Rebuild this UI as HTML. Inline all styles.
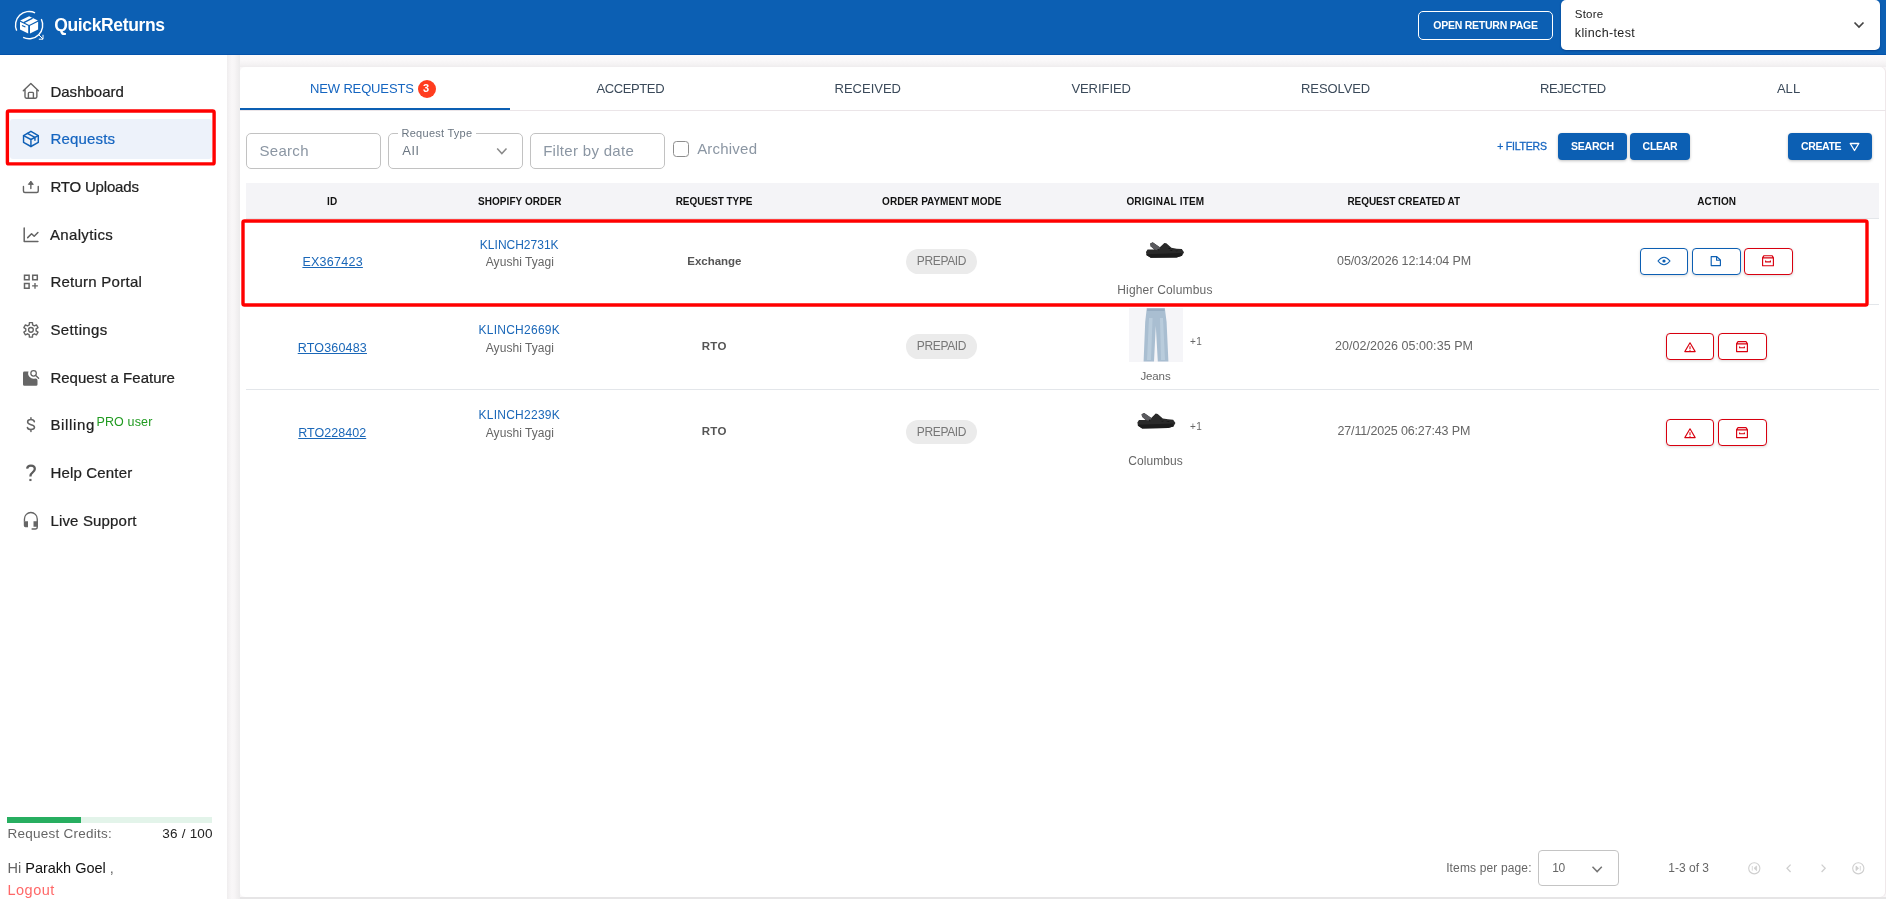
<!DOCTYPE html>
<html lang="en">
<head>
<meta charset="utf-8">
<title>QuickReturns - Requests</title>
<style>
*{box-sizing:border-box;margin:0;padding:0}
html,body{width:1886px;height:899px;overflow:hidden}
body{will-change:opacity,transform}
body{font-family:"Liberation Sans",sans-serif;background:#f9f7f8;color:#222;position:relative}
.abs{position:absolute}
.t{position:absolute;white-space:nowrap;line-height:1}
.c{transform:translateX(-50%)}
/* header */
#hdr{position:absolute;left:0;top:0;width:1886px;height:55px;background:#0c5fb3;border-bottom:1px solid #0453ab}
#brand{left:54.2px;top:17px;font-size:17.5px;font-weight:700;color:#fff;letter-spacing:-0.2px}
#orp{position:absolute;left:1418px;top:11px;width:135px;height:29px;border:1px solid #fff;border-radius:5px;color:#fff;font-size:10.5px;font-weight:700;text-align:center;line-height:27px;letter-spacing:0.1px}
#store{position:absolute;left:1561px;top:0;width:319px;height:50px;background:#fff;border-radius:5px;box-shadow:0 1px 2px rgba(0,40,110,.5)}
/* sidebar */
#side{position:absolute;left:0;top:55px;width:227px;height:844px;background:#fff}
#sideshadow{position:absolute;left:227px;top:55px;width:13px;height:844px;background:linear-gradient(90deg,#efedee 0%,#f4f2f3 15%,#f9f7f8 38%,#f7f5f6 58%,#f2f0f1 78%,#ecebec 100%)}
#topgap{position:absolute;left:236px;top:55px;width:1650px;height:12px;background:linear-gradient(180deg,#fcfafb 0%,#faf8f9 45%,#f4f2f3 80%,#efecee 100%)}
#botgap{position:absolute;left:236px;top:897px;width:1650px;height:2px;background:#e6e5e6}
.nav{position:absolute;left:50.4px;font-size:15px;color:#222;-webkit-text-stroke:0.22px;white-space:nowrap;line-height:1;letter-spacing:0.15px}
.ico{position:absolute;left:21px;width:20px;height:20px}
/* main */
#card{position:absolute;left:240px;top:67px;width:1645px;box-shadow:1px 0 0 #efe8ea;height:830px;background:#fff;border-radius:5px}
.tab{font-size:13px;color:#3b4a5a;letter-spacing:0.45px;top:82px}
.inp{position:absolute;top:133px;height:36px;width:135px;border:1px solid #c2c2c2;border-radius:5px;background:#fff}
.ph{font-size:15px;color:#8b96a3;letter-spacing:0.2px}
.btn{position:absolute;top:133px;height:27px;background:#0c5fb3;border-radius:4px;color:#fff;font-size:10.5px;font-weight:700;text-align:center;line-height:27px;box-shadow:0 1px 3px rgba(0,0,0,.25)}
.th{font-size:10px;font-weight:700;color:#111;top:197px;letter-spacing:0.2px}
.td{font-size:12px;color:#666}
.lnk{color:#1a67b8}
.chip{position:absolute;width:70.5px;height:24.6px;border-radius:12.3px;background:#ebebeb;color:#777;font-size:12px;text-align:center;line-height:24px;left:906.2px}
.ab{position:absolute;width:49px;height:27px;border-radius:4px;border:1px solid #d8000f;background:#fff;box-shadow:0 1px 3px rgba(0,0,0,.15)}
.ab.b{border-color:#0c5fb3}
.ab svg{position:absolute;left:17px;top:6px;width:14px;height:14px}
.rowline{position:absolute;left:246px;width:1633px;height:1px;background:#e3e6ea}
</style>
</head>
<body>
<div id="hdr"></div>
<div class="t" id="brand" style="letter-spacing:-0.352px">QuickReturns</div>
<div id="orp" style="letter-spacing:-0.245px">OPEN RETURN PAGE</div>
<div id="store"></div>
<div class="t" style="left:1574.86px;top:9px;font-size:11.5px;color:#222;letter-spacing:0.177px">Store</div>
<div class="t" style="left:1574.80px;top:27px;font-size:12.5px;color:#222;letter-spacing:0.371px">klinch-test</div>

<div id="side"></div>
<div id="topgap"></div>
<div id="botgap"></div>
<div id="sideshadow"></div>

<div id="card"></div>


<div class="abs" style="left:10px;top:119px;width:202px;height:40px;background:#edf2fa;border-radius:3px"></div>
<!-- icons -->
<svg class="abs" style="left:0;top:0" width="240" height="560" viewBox="0 0 240 560" fill="none" stroke="#646464" stroke-width="1.4" stroke-linecap="round" stroke-linejoin="round">
  <!-- logo -->
  <g stroke="#fff" stroke-width="1.4" stroke-linecap="butt">
    <path d="M35.06 12.88 A13.6 13.6 0 0 0 16.68 30.63"/>
    <path d="M23.14 37.33 A13.6 13.6 0 0 0 41.32 19.14"/>
    <path d="M38.6 34.6 L43 39 M43 34.8 V39.2 H38.8" stroke-width="1"/>
  </g>
  <g fill="#fff" stroke="none">
    <path d="M29.1 16.3 L37.9 20.6 L29.1 25 L20.2 20.6 Z"/>
    <path d="M20 21.7 L28.2 25.8 V33.6 L20 29.5 Z"/>
    <path d="M30 25.8 L38.1 21.7 V29.5 L30 33.6 Z"/>
  </g>
  <path d="M32.6 18.2 L23.8 22.6" stroke="#0c5fb3" stroke-width="1.5" stroke-linecap="butt"/>
  <path d="M22 25.4 L25.4 27" stroke="#0c5fb3" stroke-width="1.1" stroke-linecap="butt"/>
  <!-- home -->
  <path d="M23.3 90.8 L30.85 83.5 L38.4 90.8 M25 89.4 V96.8 Q25 98.2 26.4 98.2 H35.45 Q36.85 98.2 36.85 96.8 V89.4 M28.4 98.2 V93.2 Q28.4 92.4 29.2 92.4 H32.6 Q33.4 92.4 33.4 93.2 V98.2"/>
  <!-- package -->
  <g stroke="#0f60b6" stroke-width="1.45">
    <path d="M30.93 131.3 L38.3 135.6 V142.4 L30.93 146.5 L23.55 142.4 V135.6 Z"/>
    <path d="M23.6 135.65 L30.93 139.5 L38.25 135.65 M30.93 139.5 V146.4 M27.3 133.4 L34.95 137.4 V140.3"/>
  </g>
  <!-- upload -->
  <path d="M23.45 186.4 V191 Q23.45 192.5 24.9 192.5 H36.8 Q38.25 192.5 38.25 191 V186.4 M30.85 188.6 V182"/>
  <path d="M28.6 184.1 L30.85 181.2 L33.1 184.1 Z" fill="#646464" stroke-width="1"/>
  <!-- analytics -->
  <path d="M24.2 227.9 V241.5 H37.9 M27.7 237.6 L31.55 233.7 L34.2 236.3 L37.9 232.5" stroke-width="1.5"/>
  <!-- grid plus -->
  <path d="M24.5 275.15 h4.6 v4.6 h-4.6 Z M32.7 275.15 h4.6 v4.6 h-4.6 Z M24.5 283.55 h4.6 v4.6 h-4.6 Z" stroke-width="1.5" stroke-linejoin="miter"/>
  <path d="M35 283 v5.8 M32.1 285.9 h5.8" stroke-width="1.35" stroke-linecap="butt"/>
  <!-- gear -->
  <path d="M29.26 324.88 L29.38 322.57 L32.48 322.57 L32.60 324.88 L34.40 325.92 L36.47 324.87 L38.02 327.56 L36.08 328.82 L36.08 330.90 L38.02 332.16 L36.47 334.85 L34.40 333.80 L32.60 334.84 L32.48 337.15 L29.38 337.15 L29.26 334.84 L27.46 333.80 L25.39 334.85 L23.84 332.16 L25.78 330.90 L25.78 328.82 L23.84 327.56 L25.39 324.87 L27.46 325.92 Z" stroke-width="1.35"/>
  <circle cx="30.93" cy="329.86" r="2.4" stroke-width="1.35"/>
  <!-- request feature -->
  <path d="M24.4 371.5 H28.5 A5.4 5.4 0 0 0 35.2 378.5 Q37.5 378.3 37.5 380.4 V384.4 A1.4 1.4 0 0 1 36.1 385.8 H24.4 A1.4 1.4 0 0 1 23 384.4 V372.9 A1.4 1.4 0 0 1 24.4 371.5 Z" fill="#666" stroke="none"/>
  <circle cx="33.58" cy="373.35" r="2.75" stroke-width="1.25"/>
  <path d="M35.7 375.5 L38.6 378.2" stroke-width="1.4"/>
  <!-- dollar -->
  <path d="M34.4 421.8 C34 420.2 32.7 419.6 30.95 419.6 C29 419.6 27.6 420.6 27.6 422.1 C27.6 423.8 29.3 424.3 30.95 424.7 C32.9 425.2 34.5 425.8 34.5 427.3 C34.5 428.8 33 429.5 30.95 429.5 C29.1 429.5 27.7 428.9 27.4 427.5 M30.95 417.7 V419.6 M30.95 429.5 V431.6" stroke-width="1.5"/>
  <!-- question -->
  <path d="M27.1 468.6 C27.4 466.6 28.9 465.6 30.9 465.6 C33.2 465.6 34.8 467 34.8 469 C34.8 470.8 33.6 471.7 32.4 472.6 C31 473.6 30.4 474.5 30.4 476.4" stroke="#5c5c5c" stroke-width="2.3" stroke-linecap="butt"/>
  <rect x="29.35" y="478.9" width="2.15" height="2.15" fill="#646464" stroke="none"/>
  <!-- headset -->
  <path d="M24.45 521.5 V518.9 A6.4 6.4 0 0 1 37.25 518.9 V527 Q37.25 529 35.2 529 H31.6" stroke-width="1.35" stroke-linecap="butt"/>
  <path d="M23.8 521.3 H28 V527.2 H25.4 A1.6 1.6 0 0 1 23.8 525.6 Z M33.5 521.3 H37.9 V526.8 H33.5 Z" fill="#666" stroke="none"/>
</svg>
<!-- sidebar nav2 -->
<svg class="abs" style="left:0;top:104px" width="222" height="68" viewBox="0 104 222 68"><rect x="7.4" y="111" width="206.7" height="52.9" rx="1.5" fill="none" stroke="#ff0000" stroke-width="3.4"/></svg>
<div class="nav" style="top:84px;letter-spacing:0.021px">Dashboard</div>
<div class="nav" style="top:131px;color:#1565c0;letter-spacing:0.194px">Requests</div>
<div class="nav" style="top:179px;letter-spacing:-0.178px">RTO Uploads</div>
<div class="nav" style="left:49.9px;top:227px;letter-spacing:0.36px">Analytics</div>
<div class="nav" style="top:274px;letter-spacing:0.254px">Return Portal</div>
<div class="nav" style="top:322px;letter-spacing:0.389px">Settings</div>
<div class="nav" style="top:370px;letter-spacing:0.018px">Request a Feature</div>
<div class="nav" style="top:417px;letter-spacing:0.651px">Billing</div>
<div class="t" style="left:96.48px;top:416px;font-size:12.5px;color:#1f9a1f;letter-spacing:0.141px">PRO user</div>
<div class="nav" style="top:465px;letter-spacing:0.171px">Help Center</div>
<div class="nav" style="top:513px;letter-spacing:0.168px">Live Support</div>

<div class="abs" style="left:7px;top:817px;width:205px;height:6px;background:#e3f4ea"></div>
<div class="abs" style="left:7px;top:817px;width:74px;height:6px;background:#27ae60"></div>
<div class="t" style="left:7.57px;top:826.6px;font-size:13.5px;color:#666;letter-spacing:0.25px">Request Credits:</div>
<div class="t" style="right:1673.17px;top:826.6px;font-size:13.5px;color:#222;letter-spacing:0.231px">36 / 100</div>
<div class="t" style="left:7.5px;top:861px;font-size:14.5px;color:#666">Hi <span style="color:#111">Parakh Goel</span> ,</div>
<div class="t" style="left:7.43px;top:883px;font-size:14.5px;color:#ff6868;letter-spacing:0.517px">Logout</div>

<!-- tabs -->
<div class="abs" style="left:240px;top:109.5px;width:1646px;height:1px;background:#ebe5e8"></div>
<div class="abs" style="left:240px;top:108px;width:270px;height:2px;background:#0c5fb3"></div>
<div class="t tab" style="left:310.02px;color:#1565c0;letter-spacing:-0.145px">NEW REQUESTS</div>
<div class="abs" style="left:418px;top:79.5px;width:18.2px;height:18.2px;border-radius:9.1px;background:#ff3d1f"></div>
<div class="t" style="left:423px;top:83px;font-size:11px;font-weight:700;color:#fff">3</div>
<div class="t tab c" style="left:630.30px;letter-spacing:-0.381px">ACCEPTED</div>
<div class="t tab c" style="left:867.78px;letter-spacing:-0.011px">RECEIVED</div>
<div class="t tab c" style="left:1101.17px;letter-spacing:-0.052px">VERIFIED</div>
<div class="t tab c" style="left:1335.58px;letter-spacing:-0.092px">RESOLVED</div>
<div class="t tab c" style="left:1572.89px;letter-spacing:-0.339px">REJECTED</div>
<div class="t tab c" style="left:1788.54px;letter-spacing:0.031px">ALL</div>

<!-- filters -->
<div class="inp" style="left:246px"></div>
<div class="t ph" style="left:259.39px;top:143px;letter-spacing:0.327px">Search</div>
<div class="inp" style="left:388px"></div>
<div class="abs" style="left:398px;top:131px;width:78px;height:5px;background:#fff"></div>
<div class="t" style="left:401.52px;top:128px;font-size:11px;color:#6b7682;letter-spacing:0.266px">Request Type</div>
<div class="t" style="left:402.14px;top:144px;font-size:13px;color:#6b7682;letter-spacing:1.076px">All</div>
<svg class="abs" style="left:495px;top:146px" width="14" height="10" viewBox="0 0 14 10"><path d="M2.2 2.6 L6.85 7.6 L11.5 2.6" fill="none" stroke="#8a8a8a" stroke-width="1.5"/></svg>
<div class="inp" style="left:530px"></div>
<div class="t ph" style="left:543.15px;top:143px;letter-spacing:0.302px">Filter by date</div>
<div class="abs" style="left:673px;top:141px;width:16px;height:16px;border:1.5px solid #8e8e8e;border-radius:3.5px;background:#fff"></div>
<div class="t ph" style="left:697.14px;top:141px;letter-spacing:0.213px">Archived</div>
<div class="t" style="left:1497.14px;top:140.6px;font-size:10.5px;color:#1565c0;-webkit-text-stroke:0.3px #1565c0;letter-spacing:-0.204px">+ FILTERS</div>
<div class="btn" style="left:1558px;width:69px;letter-spacing:-0.249px">SEARCH</div>
<div class="btn" style="left:1630px;width:60px;letter-spacing:-0.278px">CLEAR</div>
<div class="btn" style="left:1788px;width:84px;text-align:left;padding-left:13px;letter-spacing:-0.394px">CREATE</div>
<svg class="abs" style="left:1849px;top:142px" width="11" height="10" viewBox="0 0 11 10"><path d="M1.2 1.5 H9.8 L5.5 8.5 Z" fill="none" stroke="#fff" stroke-width="1.3" stroke-linejoin="round"/></svg>

<!-- table header -->
<div class="abs" style="left:246px;top:183px;width:1633px;height:36px;background:#f4f4f7"></div>
<div class="rowline" style="top:218px"></div>
<div class="t th c" style="left:332.35px;letter-spacing:0.404px">ID</div>
<div class="t th c" style="left:519.68px;letter-spacing:0.072px">SHOPIFY ORDER</div>
<div class="t th c" style="left:714.08px;letter-spacing:-0.038px">REQUEST TYPE</div>
<div class="t th c" style="left:941.76px;letter-spacing:0.021px">ORDER PAYMENT MODE</div>
<div class="t th c" style="left:1165.36px;letter-spacing:0.198px">ORIGINAL ITEM</div>
<div class="t th c" style="left:1403.75px;letter-spacing:-0.06px">REQUEST CREATED AT</div>
<div class="t th c" style="left:1716.70px;letter-spacing:0.058px">ACTION</div>
<div class="rowline" style="top:304px"></div>
<div class="rowline" style="top:389px"></div>

<!-- row 1 -->
<div class="t td c lnk" style="left:332.63px;top:256px;text-decoration:underline;font-size:12.5px;letter-spacing:0.262px">EX367423</div>
<div class="t td c lnk" style="left:519.23px;top:239px;letter-spacing:-0.001px">KLINCH2731K</div>
<div class="t td c" style="left:519.93px;top:256px;letter-spacing:0.056px">Ayushi Tyagi</div>
<div class="t td c" style="left:714.38px;top:256px;font-weight:700;font-size:11.5px;color:#555;letter-spacing:-0.032px">Exchange</div>
<div class="chip" style="top:249px;letter-spacing:-0.372px">PREPAID</div>
<div class="t td c" style="left:1164.91px;top:284px;letter-spacing:0.177px">Higher Columbus</div>
<div class="t td c" style="left:1404.02px;top:255px;font-size:12.5px;letter-spacing:-0.142px">05/03/2026 12:14:04 PM</div>
<!-- row 2 -->
<div class="t td c lnk" style="left:332.35px;top:342px;text-decoration:underline;font-size:12.5px;letter-spacing:0.178px">RTO360483</div>
<div class="t td c lnk" style="left:519.27px;top:324px;letter-spacing:0.257px">KLINCH2669K</div>
<div class="t td c" style="left:519.93px;top:342px;letter-spacing:0.056px">Ayushi Tyagi</div>
<div class="t td c" style="left:714.24px;top:341px;font-weight:700;font-size:11.5px;color:#555;letter-spacing:0.348px">RTO</div>
<div class="chip" style="top:334.2px;line-height:25.4px;letter-spacing:-0.372px">PREPAID</div>
<div class="t td c" style="left:1155.48px;top:371px;font-size:11.5px;letter-spacing:-0.109px">Jeans</div>
<div class="t td" style="left:1190.02px;top:337px;font-size:10px;letter-spacing:0.454px">+1</div>
<div class="t td c" style="left:1404.01px;top:340px;font-size:12.5px;letter-spacing:0.054px">20/02/2026 05:00:35 PM</div>
<!-- row 3 -->
<div class="t td c lnk" style="left:332.24px;top:427px;text-decoration:underline;font-size:12.5px;letter-spacing:0.033px">RTO228402</div>
<div class="t td c lnk" style="left:519.27px;top:409px;letter-spacing:0.257px">KLINCH2239K</div>
<div class="t td c" style="left:519.93px;top:427px;letter-spacing:0.056px">Ayushi Tyagi</div>
<div class="t td c" style="left:714.24px;top:426px;font-weight:700;font-size:11.5px;color:#555;letter-spacing:0.348px">RTO</div>
<div class="chip" style="top:419.6px;line-height:25.4px;letter-spacing:-0.372px">PREPAID</div>
<div class="t td c" style="left:1155.61px;top:455px;letter-spacing:0.087px">Columbus</div>
<div class="t td" style="left:1190.02px;top:422px;font-size:10px;letter-spacing:0.454px">+1</div>
<div class="t td c" style="left:1403.84px;top:425px;font-size:12.5px;letter-spacing:-0.147px">27/11/2025 06:27:43 PM</div>


<!-- action buttons -->
<div class="ab b" style="left:1640px;top:248px;width:48px"></div>
<div class="ab b" style="left:1692px;top:248px"></div>
<div class="ab" style="left:1744px;top:248px"></div>
<div class="ab" style="left:1666px;top:333px;width:48px"></div>
<div class="ab" style="left:1718px;top:333px"></div>
<div class="ab" style="left:1666px;top:419px;width:48px"></div>
<div class="ab" style="left:1718px;top:419px"></div>
<svg class="abs" style="left:1630px;top:230px" width="180" height="230" viewBox="1630 230 180 230">
<path d="M1658 261 Q1664 253.4 1670 261 Q1664 268.6 1658 261 Z" fill="none" stroke="#0c5fb3" stroke-width="1.1"/><circle cx="1664" cy="261" r="1.6" fill="#0c5fb3"/>
<path d="M1711.1999999999998 256.6 H1716.8 L1720.3999999999999 260 V265.6 H1711.1999999999998 Z M1716.6 256.8 V260.2 H1720.1999999999998" fill="none" stroke="#0c5fb3" stroke-width="1.15" stroke-linejoin="round"/>
<path d="M1762.6 257.7 L1764 255.7 H1772 L1773.4 257.7 V265.7 H1762.6 Z M1762.6 257.9 H1773.4" fill="none" stroke="#d8000f" stroke-width="1.15" stroke-linejoin="round"/><path d="M1765.6 260.5 V261.9 H1770.4 V260.5" fill="none" stroke="#d8000f" stroke-width="1.1" stroke-linejoin="round"/>
<path d="M1690 342.8 L1695.2 351.6 H1684.8 Z" fill="none" stroke="#d8000f" stroke-width="1.1" stroke-linejoin="round"/><path d="M1690 346.2 V349.2" stroke="#d8000f" stroke-width="1.1"/><circle cx="1690" cy="350.5" r=".55" fill="#d8000f"/>
<path d="M1736.6 343.6 L1738 341.6 H1746 L1747.4 343.6 V351.6 H1736.6 Z M1736.6 343.8 H1747.4" fill="none" stroke="#d8000f" stroke-width="1.15" stroke-linejoin="round"/><path d="M1739.6 346.4 V347.8 H1744.4 V346.4" fill="none" stroke="#d8000f" stroke-width="1.1" stroke-linejoin="round"/>
<path d="M1690 428.8 L1695.2 437.6 H1684.8 Z" fill="none" stroke="#d8000f" stroke-width="1.1" stroke-linejoin="round"/><path d="M1690 432.2 V435.2" stroke="#d8000f" stroke-width="1.1"/><circle cx="1690" cy="436.5" r=".55" fill="#d8000f"/>
<path d="M1736.6 429.6 L1738 427.6 H1746 L1747.4 429.6 V437.6 H1736.6 Z M1736.6 429.8 H1747.4" fill="none" stroke="#d8000f" stroke-width="1.15" stroke-linejoin="round"/><path d="M1739.6 432.4 V433.8 H1744.4 V432.4" fill="none" stroke="#d8000f" stroke-width="1.1" stroke-linejoin="round"/>
</svg>

<!-- product images -->
<svg class="abs" style="left:1120px;top:222px" width="90" height="220" viewBox="1120 222 90 220">
<g transform="translate(1125,222) scale(0.0645)"><path d="M390 335 L430 315 L540 392 L610 325 L640 330 L720 400 L800 415 L880 420 L915 470 L885 525 L800 550 L400 555 L335 515 L325 465 L350 425 L455 425 L398 375 Z" fill="#2a2a2a"/><path d="M392 336 L430 316 L545 395 L520 440 L455 425 L398 375 Z" fill="#5a5a5e"/><path d="M330 500 L880 480 L885 525 L800 550 L400 555 L335 515 Z" fill="#1c1c1c"/><ellipse cx="515" cy="432" rx="14" ry="14" fill="#1a1a1a"/><path d="M665 405 l40 0 l-15 12 z M690 440 l50 -5 l-20 14 z M770 445 l60 0 l-25 10 z" fill="#111"/></g>
<rect x="1129" y="308" width="54" height="54" fill="#f5f5f8"/>
<path d="M1146.8 308 H1164.8 L1166.6 322 L1168.4 361.6 H1157.8 L1155.8 326 L1154 361.6 H1143.6 L1145.2 322 Z" fill="#a9bed1"/>
<path d="M1149 318 L1152.6 318 L1151 360 L1147 360 Z M1160 318 L1163 318 L1165 360 L1161 360 Z" fill="#bfd0df" opacity=".75"/>
<path d="M1147 309 H1164.6 V311 H1147 Z" fill="#97adc2"/>
<g transform="translate(1116.4,392.6) scale(0.0645)"><path d="M390 335 L430 315 L540 392 L610 325 L640 330 L720 400 L800 415 L880 420 L915 470 L885 525 L800 550 L400 555 L335 515 L325 465 L350 425 L455 425 L398 375 Z" fill="#2a2a2a"/><path d="M392 336 L430 316 L545 395 L520 440 L455 425 L398 375 Z" fill="#5a5a5e"/><path d="M330 500 L880 480 L885 525 L800 550 L400 555 L335 515 Z" fill="#1c1c1c"/><ellipse cx="515" cy="432" rx="14" ry="14" fill="#1a1a1a"/><path d="M665 405 l40 0 l-15 12 z M690 440 l50 -5 l-20 14 z M770 445 l60 0 l-25 10 z" fill="#111"/></g>
</svg>

<!-- paginator icons -->
<svg class="abs" style="left:1740px;top:856px" width="130" height="24" viewBox="1740 856 130 24" fill="none" stroke="#cfcfcf" stroke-width="1.1">
<circle cx="1754.3" cy="868.3" r="5.6"/><path d="M1752.3 866 V870.6 M1756.6 866 L1754 868.3 L1756.6 870.6 Z" fill="#cfcfcf" stroke-width=".8"/>
<path d="M1790.6 864.6 L1787 868.3 L1790.6 872" stroke-width="1.3"/>
<path d="M1821.6 864.6 L1825.2 868.3 L1821.6 872" stroke-width="1.3"/>
<circle cx="1858.3" cy="868.3" r="5.6"/><path d="M1860.3 866 V870.6 M1856 866 L1858.6 868.3 L1856 870.6 Z" fill="#cfcfcf" stroke-width=".8"/>
</svg>
<svg class="abs" style="left:1851px;top:17.8px" width="16" height="14" viewBox="0 0 16 14"><path d="M3.5 4.5 L8 9 L12.5 4.5" fill="none" stroke="#444" stroke-width="1.7"/></svg>
<!-- red highlight box -->
<svg class="abs" style="left:236px;top:214px" width="1640" height="98" viewBox="236 214 1640 98"><rect x="243" y="221" width="1624" height="84" rx="1.5" fill="none" stroke="#ff0000" stroke-width="3.4"/></svg>

<!-- paginator -->
<div class="t" style="left:1446.14px;top:862px;font-size:12px;color:#666;letter-spacing:0.142px">Items per page:</div>
<div class="abs" style="left:1538px;top:850px;width:81px;height:36px;border:1px solid #c4c4c4;border-radius:4px"></div>
<div class="t" style="left:1552.33px;top:862px;font-size:12px;color:#666;letter-spacing:-0.5px">10</div>
<svg class="abs" style="left:1590px;top:864px" width="14" height="10" viewBox="0 0 14 10"><path d="M2.5 2.8 L7.15 7.6 L11.8 2.8" fill="none" stroke="#757575" stroke-width="1.5"/></svg>
<div class="t" style="left:1668.27px;top:862px;font-size:12px;color:#666;letter-spacing:0.004px">1-3 of 3</div>
</body>
</html>
